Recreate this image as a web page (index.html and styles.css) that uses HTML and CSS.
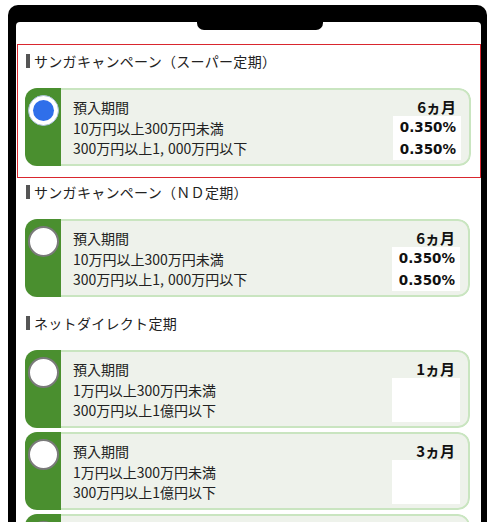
FILE: index.html
```html
<!DOCTYPE html>
<html lang="ja">
<head>
<meta charset="utf-8">
<title>定期預金</title>
<link rel="stylesheet" href="styles.css">
</head>
<body>
<div class="phone">
  <div class="screen">
    <div class="notch"></div>
    <div class="list">
      <section class="section selected">
        <h2 class="section-title">サンガキャンペーン（スーパー定期）</h2>
        <div class="card">
          <div class="stripe"><span class="radio checked"></span></div>
          <div class="body">
            <div class="labels">
              <div>預入期間</div>
              <div>10万円以上300万円未満</div>
              <div>300万円以上1<span class="comma">,</span>000万円以下</div>
            </div>
            <div class="values">
              <div class="term">6ヵ月</div>
              <div class="rates">
                <div>0.350%</div>
                <div>0.350%</div>
              </div>
            </div>
          </div>
        </div>
      </section>

      <section class="section">
        <h2 class="section-title">サンガキャンペーン（ＮＤ定期）</h2>
        <div class="card">
          <div class="stripe"><span class="radio"></span></div>
          <div class="body">
            <div class="labels">
              <div>預入期間</div>
              <div>10万円以上300万円未満</div>
              <div>300万円以上1<span class="comma">,</span>000万円以下</div>
            </div>
            <div class="values">
              <div class="term">6ヵ月</div>
              <div class="rates">
                <div>0.350%</div>
                <div>0.350%</div>
              </div>
            </div>
          </div>
        </div>
      </section>

      <section class="section">
        <h2 class="section-title">ネットダイレクト定期</h2>
        <div class="cards">
          <div class="card">
            <div class="stripe"><span class="radio"></span></div>
            <div class="body">
              <div class="labels">
                <div>預入期間</div>
                <div>1万円以上300万円未満</div>
                <div>300万円以上1億円以下</div>
              </div>
              <div class="values">
                <div class="term">1ヵ月</div>
                <div class="rates"></div>
              </div>
            </div>
          </div>
          <div class="card">
            <div class="stripe"><span class="radio"></span></div>
            <div class="body">
              <div class="labels">
                <div>預入期間</div>
                <div>1万円以上300万円未満</div>
                <div>300万円以上1億円以下</div>
              </div>
              <div class="values">
                <div class="term">3ヵ月</div>
                <div class="rates"></div>
              </div>
            </div>
          </div>
          <div class="card">
            <div class="stripe"><span class="radio"></span></div>
            <div class="body"></div>
          </div>
        </div>
      </section>
    </div>
  </div>
</div>
</body>
</html>
```

FILE: styles.css
```css
* {
  box-sizing: border-box;
}

html, body {
  margin: 0;
  padding: 0;
  background: #ffffff;
  overflow: hidden;
}

body {
  font-family: "Noto Sans CJK JP", "Noto Sans", sans-serif;
  color: #222222;
  text-spacing-trim: space-all;
}

.phone {
  margin: 5px 0 0 8px;
  width: 479px;
  height: 517px;
  background: #000000;
  border-radius: 10px 10px 0 0;
  padding: 17px 6px 0 8px;
  overflow: hidden;
}

.screen {
  position: relative;
  height: 100%;
  background: #ffffff;
  border-radius: 4px 4px 0 0;
  overflow: hidden;
}

.notch {
  position: absolute;
  top: 0;
  left: 181px;
  width: 126px;
  height: 8px;
  background: #000000;
  border-radius: 0 0 7px 7px;
}

.list {
  padding: 22px 0 0 1px;
}

.section {
  width: 464px;
  padding: 0 11px 12px 8px;
}

.section.selected {
  border: 1px solid #d9262e;
  padding: 2px 9px 11px 7px;
}

.section-title {
  display: flex;
  align-items: center;
  height: 28px;
  margin: 0 0 13px;
  padding-left: 1px;
  font-size: 14px;
  font-weight: normal;
  line-height: 28px;
  letter-spacing: 0.3px;
  color: #222222;
}

.section-title::before {
  content: "";
  display: block;
  width: 4px;
  height: 14px;
  margin-right: 4px;
  background: #555555;
}

.cards {
  display: flex;
  flex-direction: column;
  gap: 4px;
}

.card {
  display: flex;
  height: 78px;
  border-radius: 12px;
  overflow: hidden;
}

.stripe {
  flex: 0 0 36px;
  background: #4a8f2f;
  padding: 7px 0 0 3px;
}

.radio {
  display: block;
  width: 31px;
  height: 31px;
  border-radius: 50%;
  background: #ffffff;
  border: 2px solid #7a7a7a;
}

.radio.checked {
  border: 1px solid #a9bfd9;
  position: relative;
}

.radio.checked::after {
  content: "";
  position: absolute;
  left: 4px;
  top: 4px;
  width: 21px;
  height: 21px;
  border-radius: 50%;
  background: #2f6fea;
}

.body {
  flex: 1;
  display: flex;
  justify-content: space-between;
  background: #eef2eb;
  border: 2px solid #c9e5c0;
  border-left: 0;
  border-radius: 0 12px 12px 0;
  padding: 0 8px 0 12px;
}

.labels {
  padding-top: 7px;
  font-size: 14px;
  line-height: 20.5px;
  color: #222222;
}

.comma {
  margin-right: 4px;
}

.values {
  display: flex;
  flex-direction: column;
  align-items: flex-end;
  width: 68px;
}

.term {
  padding: 8px 5px 0 0;
  height: 26px;
  font-size: 15px;
  font-weight: bold;
  line-height: 18px;
  color: #111111;
}

.rates {
  width: 68px;
  height: 44px;
  background: #ffffff;
  padding-right: 5px;
  text-align: right;
  font-family: "DejaVu Sans", sans-serif;
  font-size: 13.5px;
  font-weight: bold;
  line-height: 22px;
  color: #111111;
}
```
